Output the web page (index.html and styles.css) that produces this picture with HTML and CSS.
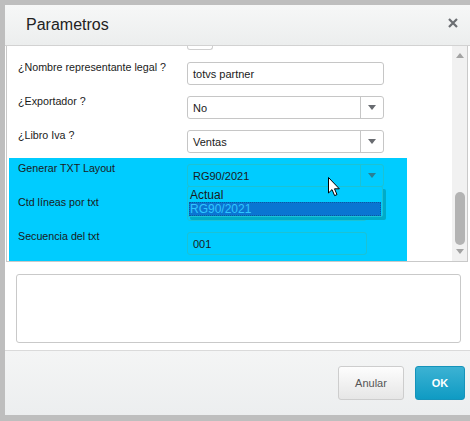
FILE: index.html
```html
<!DOCTYPE html>
<html lang="es">
<head>
  <meta charset="UTF-8">
  <title>Parametros</title>
  <link rel="stylesheet" href="styles.css">
</head>
<body>

  <div class="dialog">
    <div class="header">
      <span class="title">Parametros</span>
      <svg class="close" width="10" height="10" viewBox="0 0 10 10">
        <path d="M1 1 L9 9 M9 1 L1 9" stroke="#6b6e72" stroke-width="2.2" fill="none"/>
      </svg>
    </div>

    <div class="panel">
      <div class="form">
        <div class="stub"></div>

        <div class="row">
          <label>¿Nombre representante legal ?</label>
          <div class="field wide">totvs partner</div>
        </div>
        <div class="row">
          <label>¿Exportador ?</label>
          <div class="select"><span>No</span><i class="btn"><b class="arrow"></b></i></div>
        </div>
        <div class="row">
          <label>¿Libro Iva ?</label>
          <div class="select"><span>Ventas</span><i class="btn"><b class="arrow"></b></i></div>
        </div>

        <div class="highlight">
          <div class="row">
            <label>Generar TXT Layout</label>
            <div class="select"><span>RG90/2021</span><i class="btn"><b class="arrow"></b></i></div>
          </div>
          <div class="row">
            <label>Ctd líneas por txt</label>
            <div class="field"></div>
          </div>
          <div class="row">
            <label>Secuencia del txt</label>
            <div class="field">001</div>
          </div>

          <div class="dropdown">
            <div class="option">Actual</div>
            <div class="option selected">RG90/2021</div>
          </div>

          <svg class="cursor" width="13" height="20" viewBox="0 0 13 20">
            <path d="M0.5 0.5 L0.5 16 L4 12.6 L6.6 18.6 L9 17.6 L6.5 11.8 L11.3 11.8 Z" fill="#fff" stroke="#000" stroke-width="1"/>
          </svg>
        </div>
      </div>

      <div class="scrollbar">
        <b class="up"></b>
        <div class="track"><div class="thumb"></div></div>
        <b class="down"></b>
      </div>
    </div>

    <div class="notes">
      <div class="memo"></div>
    </div>

    <div class="footer">
      <button class="cancel">Anular</button>
      <button class="ok">OK</button>
    </div>
  </div>

</body>
</html>
```

FILE: styles.css
```css
html, body {
  margin: 0;
  overflow: hidden;
}
body {
  font-family: "Liberation Sans", Arial, sans-serif;
  background: #bebebe;
  padding: 5px 0 0 5px;
  height: 421px;
  box-sizing: border-box;
}
.dialog {
  width: 470px;
  height: 410px;
  background: #fff;
  display: flex;
  flex-direction: column;
}
.header {
  height: 39px;
  flex: none;
  display: flex;
  align-items: center;
  padding: 0 17px 1px 21px;
  background: linear-gradient(#f6f7f7, #eceeee);
  border-bottom: 1px solid #d2d2d2;
}
.title {
  flex: 1;
  font-size: 16px;
  color: #222;
}
.close {
  margin-top: -3px;
}

/* scroll panel */
.panel {
  flex: none;
  display: flex;
  width: 462px;
  height: 216px;
  margin-left: 1px;
  border: 1px solid #c9c9c9;
  border-top: none;
  box-sizing: border-box;
}
.form {
  flex: 1;
  overflow: hidden;
}
.stub {
  width: 24px;
  height: 3px;
  margin: 0 0 12px 180px;
  border: 1px solid #cfcfcf;
  border-top: none;
  border-radius: 0 0 3px 3px;
}
.row {
  display: flex;
  align-items: flex-start;
  height: 23px;
  margin: 0 0 11px 11px;
}
.row label {
  width: 169px;
  flex: none;
  font-size: 10.7px;
  line-height: 13px;
  color: #1a1a1a;
  margin-top: -1px;
}
.field, .select {
  height: 23px;
  box-sizing: border-box;
  border: 1px solid #c6c6c6;
  border-radius: 3px;
  font-size: 11px;
  color: #1a1a1a;
  display: flex;
  align-items: center;
}
.field {
  width: 180px;
  padding-left: 5px;
}
.field.wide {
  width: 197px;
}
.select {
  width: 197px;
}
.select span {
  flex: 1;
  padding-left: 5px;
}
.select .btn {
  width: 22px;
  height: 100%;
  border-left: 1px solid #c6c6c6;
  display: flex;
  align-items: center;
  justify-content: center;
}
.arrow {
  width: 0;
  height: 0;
  border-left: 4px solid transparent;
  border-right: 4px solid transparent;
  border-top: 5px solid #686b70;
}

/* cyan block */
.highlight {
  position: relative;
  background: #00ccff;
  width: 398px;
  margin: -6px 0 0 2px;
  padding: 6px 0 5px 0;
}
.highlight .row {
  margin-left: 9px;
}
.highlight .row:last-of-type {
  margin-bottom: 0;
}
.highlight .row label {
  margin-top: -2px;
}
.highlight .field, .highlight .select, .highlight .select .btn {
  border-color: #1cc2d4;
}
.highlight .arrow {
  border-top-color: #2a7f93;
}
.dropdown {
  position: absolute;
  left: 178px;
  top: 28px;
  width: 196px;
  height: 31px;
  box-sizing: border-box;
  border: 1px solid #1cc2d4;
  border-radius: 2px;
  background: #00ccff;
  box-shadow: 3px 3px 0 #00abc9;
  padding: 1px 1px 0 1px;
  font-size: 12px;
}
.option {
  height: 14px;
  line-height: 14px;
  padding-left: 1px;
  color: #1a1a1a;
}
.option.selected {
  background: #0a75d2;
  color: #2fc6ff;
  outline: 1px dotted #0a5aa0;
  outline-offset: -1px;
}
.cursor {
  position: absolute;
  left: 319px;
  top: 19px;
}

/* scrollbar */
.scrollbar {
  width: 15px;
  flex: none;
  background: #f1f1f1;
  display: flex;
  flex-direction: column;
  align-items: center;
}
.up, .down {
  width: 0;
  height: 0;
  border-left: 4px solid transparent;
  border-right: 4px solid transparent;
}
.up {
  margin-top: 7px;
  border-bottom: 5px solid #a3a3a3;
}
.down {
  margin-bottom: 7px;
  border-top: 5px solid #a3a3a3;
}
.track {
  flex: 1;
  width: 100%;
  display: flex;
  flex-direction: column;
  justify-content: flex-end;
  align-items: center;
  padding-bottom: 4px;
}
.thumb {
  width: 10px;
  height: 53px;
  border-radius: 5px;
  background: #b3b3b3;
}

/* memo */
.notes {
  flex: none;
  padding: 12px 0 7px 11px;
}
.memo {
  width: 445px;
  height: 69px;
  box-sizing: border-box;
  border: 1px solid #c9c9c9;
  border-radius: 3px;
}

/* footer */
.footer {
  flex: 1;
  display: flex;
  justify-content: flex-end;
  align-items: flex-start;
  gap: 11px;
  padding: 15px 10px 0 0;
  background: linear-gradient(#f4f5f5, #eceeef);
  border-top: 1px solid #dadada;
}
.footer button {
  height: 34px;
  border-radius: 3px;
  font-family: "Liberation Sans", Arial, sans-serif;
  font-size: 11px;
  cursor: pointer;
}
.cancel {
  width: 66px;
  color: #555;
  background: linear-gradient(#fdfdfd, #e6e6e6);
  border: 1px solid #cdcdcd;
}
.ok {
  width: 50px;
  color: #fff;
  font-weight: bold;
  background: linear-gradient(#3cb2d3, #0f9bc3);
  border: 1px solid #1593ba;
}
```
